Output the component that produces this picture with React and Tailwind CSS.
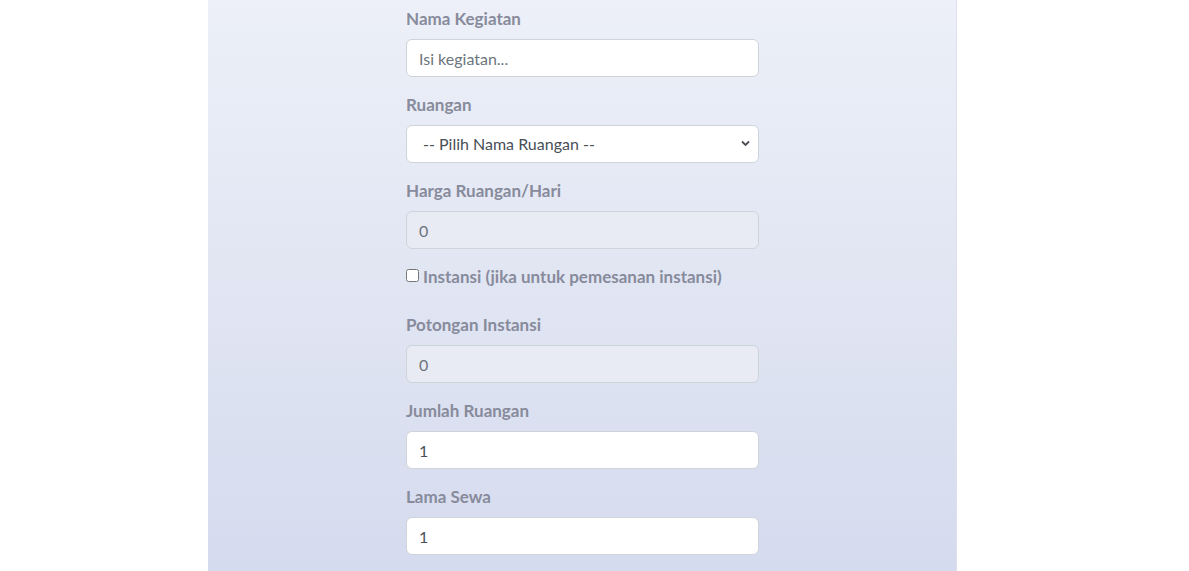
import React from 'react';

const labelCls = "block text-[17px] font-bold leading-6 text-[#878b9b] mb-2";
const inputCls = "block w-full h-[38px] px-3 text-base text-[#495057] bg-white border border-[#ced4da] rounded-md focus:outline-none placeholder:text-[#6c757d]";
const disabledCls = "block w-full h-[38px] px-3 text-base text-[#6c757d] bg-[#e8ebf3] border border-[#ced4da] rounded-md";

export default function App() {
  const [kegiatan, setKegiatan] = React.useState('');
  const [ruangan, setRuangan] = React.useState('');
  const [instansi, setInstansi] = React.useState(false);
  const [jumlah, setJumlah] = React.useState('1');
  const [lama, setLama] = React.useState('1');

  return (
    <div className="min-h-screen bg-white" style={{ fontFamily: 'Lato, "Open Sans", sans-serif' }}>
      <div className="ml-[208px] w-[749px] min-h-[571px] border-r border-[#dde0ea] bg-gradient-to-b from-[#edf0f8] to-[#d5dbee]">
        <form className="ml-[198px] w-[353px] pt-[7px]">
          <div className="mb-4">
            <label className={labelCls}>Nama Kegiatan</label>
            <input
              type="text"
              value={kegiatan}
              onChange={(e) => setKegiatan(e.target.value)}
              className={inputCls}
              placeholder="Isi kegiatan..."
            />
          </div>
          <div className="mb-4">
            <label className={labelCls}>Ruangan</label>
            <div className="relative">
              <select
                value={ruangan}
                onChange={(e) => setRuangan(e.target.value)}
                className={inputCls + " appearance-none pl-4 text-[#495057]"}
              >
                <option value="">-- Pilih Nama Ruangan --</option>
              </select>
              <svg className="absolute right-[9px] top-[15px] pointer-events-none" width="9" height="7" viewBox="0 0 9 7">
                <path d="M1 1.5 L4.5 5 L8 1.5" fill="none" stroke="#4a4d55" strokeWidth="1.8" />
              </svg>
            </div>
          </div>
          <div className="mb-4">
            <label className={labelCls}>Harga Ruangan/Hari</label>
            <input type="text" value="0" disabled className={disabledCls} />
          </div>
          <div className="mb-6 flex items-center h-6">
            <input
              type="checkbox"
              checked={instansi}
              onChange={(e) => setInstansi(e.target.checked)}
              className="w-[13px] h-[13px] m-0 mr-[4px] -mt-[3px]"
            />
            <span className="text-[17px] font-bold text-[#878b9b]">Instansi (jika untuk pemesanan instansi)</span>
          </div>
          <div className="mb-4">
            <label className={labelCls}>Potongan Instansi</label>
            <input type="text" value="0" disabled className={disabledCls} />
          </div>
          <div className="mb-4">
            <label className={labelCls}>Jumlah Ruangan</label>
            <input
              type="number"
              value={jumlah}
              onChange={(e) => setJumlah(e.target.value)}
              className={inputCls}
            />
          </div>
          <div className="mb-4">
            <label className={labelCls}>Lama Sewa</label>
            <input
              type="number"
              value={lama}
              onChange={(e) => setLama(e.target.value)}
              className={inputCls}
            />
          </div>
        </form>
      </div>
    </div>
  );
}
